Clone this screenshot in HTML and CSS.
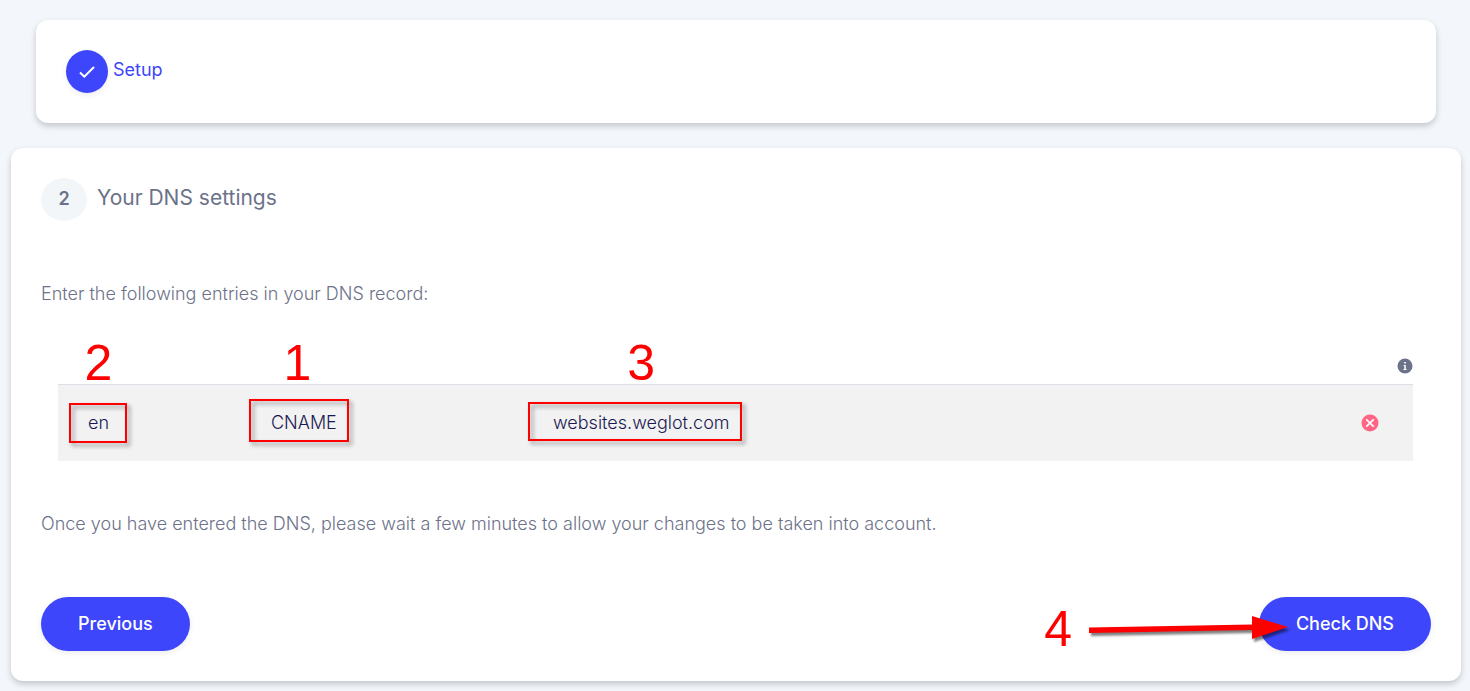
FILE: index.html
```html
<!DOCTYPE html>
<html lang="en">
<head>
    <meta charset="UTF-8">
    <meta name="viewport" content="width=device-width, initial-scale=1.0">
    <title>DNS settings</title>
    <link rel="stylesheet" href="styles.css">
</head>
<body>
    <section class="card step-done">
        <span class="check">
            <svg width="16" height="12" viewBox="0 0 16 12" fill="none" stroke="#fff" stroke-width="2">
                <path d="M1 6.5 L5.3 10.6 L15 1"/>
            </svg>
        </span>
        <span class="step-name">Setup</span>
    </section>

    <main class="card step-current">
        <div class="step-header">
            <span class="step-number">2</span>
            <h1>Your DNS settings</h1>
        </div>

        <p>Enter the following entries in your DNS record:</p>

        <div class="records">
            <div class="records-top">
                <button type="button" class="icon-button">
                    <svg width="16" height="16" viewBox="0 0 16 16">
                        <circle cx="8" cy="8" r="7.5" fill="#6c7289"/>
                        <path d="M7.2 4h1.7v1.6H7.2zM6.6 7H8.8v4h.8v1H6.4v-1H7.3V8h-.7z" fill="#fff"/>
                    </svg>
                </button>
            </div>
            <table>
                <tr>
                    <td class="col-name"><span class="mark mark-name">en<span class="num">2</span></span></td>
                    <td class="col-type"><span class="mark mark-type">CNAME<span class="num">1</span></span></td>
                    <td><span class="mark mark-value">websites.weglot.com<span class="num">3</span></span></td>
                    <td class="col-status">
                        <svg width="18" height="18" viewBox="0 0 18 18">
                            <circle cx="9" cy="9" r="8.5" fill="#ff6584"/>
                            <path d="M5.3 5.3l7.4 7.4M12.7 5.3l-7.4 7.4" stroke="#fff" stroke-width="1.7"/>
                        </svg>
                    </td>
                </tr>
            </table>
        </div>

        <p>Once you have entered the DNS, please wait a few minutes to allow your changes to be taken into account.</p>

        <div class="actions">
            <button type="button" class="button">Previous</button>
            <div class="pointed">
                <button type="button" class="button">Check DNS</button>
                <span class="num">4</span>
                <svg class="arrow" width="204" height="34" viewBox="0 0 204 34">
                    <path d="M2 16.5L165 13.5V5L201 16L165 28V19L2 22Z" fill="#f00"/>
                </svg>
            </div>
        </div>
    </main>
</body>
</html>
```

FILE: styles.css
```css
/* General Styles */
* {
    box-sizing: border-box;
}

body {
    margin: 0;
    padding: 20px 9px 10px 11px;
    background: #f3f6fb;
    font-family: Inter, sans-serif;
    font-size: 18px;
    line-height: 28px;
    color: #6c7289;
}

.card {
    background: #fff;
    border-radius: 12px;
    padding: 30px;
    box-shadow: 0 3px 6px rgba(0, 0, 0, 0.2);
}

/* Finished step */
.step-done {
    display: flex;
    gap: 5px;
    margin: 0 25px 25px;
    color: #3d46fb;
}

.check {
    display: flex;
    align-items: center;
    justify-content: center;
    width: 42px;
    height: 43px;
    border-radius: 50%;
    background: #3d46fb;
    box-shadow: 0 2px 6px rgba(0, 0, 0, 0.08);
}

.step-name {
    line-height: 40px;
}

/* Current step */
.step-header {
    display: flex;
    gap: 10px;
    margin-bottom: 59px;
}

.step-number {
    width: 46px;
    height: 43px;
    border-radius: 50%;
    background: #f3f6f9;
    font-weight: 600;
    line-height: 42px;
    text-align: center;
}

h1 {
    margin: 0;
    font-size: 21px;
    font-weight: 400;
    line-height: 40px;
}

p {
    margin: 0;
    font-weight: 300;
}

/* DNS records */
.records {
    margin: 48px 18px 49px 17px;
}

.records-top {
    display: flex;
    justify-content: flex-end;
    height: 28px;
    padding-top: 2px;
}

.icon-button {
    width: 16px;
    height: 16px;
    padding: 0;
    border: none;
    background: none;
    cursor: pointer;
}

.icon-button svg,
td svg {
    display: block;
}

table {
    width: 100%;
    border-collapse: collapse;
    table-layout: fixed;
}

td {
    height: 76px;
    padding: 0 30px;
    border-top: 1px solid #dddfe6;
    background: #f2f2f2;
    color: #1a1a52;
    font-weight: 300;
}

.col-name {
    width: 183px;
}

.col-type {
    width: 282px;
}

.col-status {
    width: 82px;
}

/* Red marks */
.mark {
    display: inline-block;
    position: relative;
}

.mark::before {
    content: "";
    position: absolute;
    inset: -6px -18px -6px -19px;
    border: 2px solid #f00;
    filter: drop-shadow(3px 3px 2px rgba(0, 0, 0, 0.4));
}

.mark-type::before {
    inset: -10px -12px -5px -22px;
}

.mark-value::before {
    inset: -7px -12px -4px -25px;
}

.num {
    position: absolute;
    color: #f00;
    font-family: "Liberation Sans", Arial, sans-serif;
    font-size: 50px;
    font-weight: 400;
    line-height: 50px;
}

.mark .num {
    left: 50%;
    bottom: 49px;
    transform: translateX(-50%);
}

.mark-type .num {
    left: 40%;
}

/* Buttons */
.actions {
    display: flex;
    justify-content: space-between;
    margin-top: 59px;
}

.pointed {
    position: relative;
}

.button {
    display: block;
    height: 54px;
    padding: 0 37px;
    border: none;
    border-radius: 27px;
    background: #3d46fb;
    box-shadow: 0 2px 6px rgba(0, 0, 0, 0.08);
    color: #fff;
    font-family: inherit;
    font-size: 18px;
    font-weight: 500;
    cursor: pointer;
}

.pointed .num {
    top: 7px;
    right: 359px;
}

.arrow {
    position: absolute;
    top: 14px;
    right: 140px;
    filter: drop-shadow(2px 3px 1px rgba(0, 0, 0, 0.5));
}
```
